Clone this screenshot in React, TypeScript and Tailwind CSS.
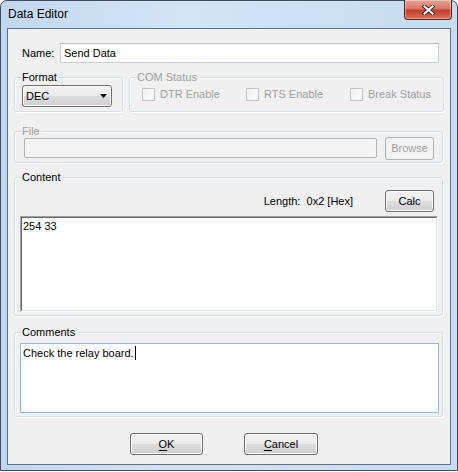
import type { ReactNode } from 'react';

const font = { fontFamily: '"Liberation Sans", Arial, sans-serif' };

function GroupBox({ label, disabled, className, children }: { label: string; disabled?: boolean; className?: string; children?: ReactNode }) {
  return (
    <div className={`relative rounded-[3px] border border-[#d5dfe5] shadow-[inset_1px_1px_0_#ffffff,1px_1px_0_#ffffff] ${className ?? ''}`}>
      <span className={`absolute -top-[7px] left-[6px] bg-[#f0f0f0] px-[1px] text-[11px] leading-[13px] ${disabled ? 'text-[#a0a0a0]' : 'text-black'}`}>
        {label}
      </span>
      {children}
    </div>
  );
}

function Button({ children, disabled, className }: { children: ReactNode; disabled?: boolean; className?: string }) {
  return (
    <button
      disabled={disabled}
      className={`flex items-center justify-center rounded-[3px] border text-[11px] leading-[13px] ${
        disabled
          ? 'border-[#adb2b5] bg-[#f4f4f4] text-[#a0a0a0]'
          : 'border-[#707070] bg-[linear-gradient(#f2f2f2_0%,#ebebeb_50%,#dddddd_51%,#cfcfcf_100%)] text-black shadow-[inset_0_0_0_1px_#fcfcfc]'
      } ${className ?? ''}`}
    >
      {children}
    </button>
  );
}

function CheckBox({ label, className }: { label: string; className?: string }) {
  return (
    <div className={`flex items-center gap-[5px] ${className ?? ''}`}>
      <div className="h-[13px] w-[13px] shrink-0 border border-[#c5c5c5] bg-[linear-gradient(135deg,#f0f0f0,#fbfbfb)]" />
      <span className="text-[11px] leading-[13px] text-[#a0a0a0]">{label}</span>
    </div>
  );
}

export default function App() {
  return (
    <div className="h-[472px] w-[458px] bg-white" style={font}>
      <div className="flex h-[471px] w-[458px] flex-col rounded-t-[7px] border border-[#3e4c5e] bg-[linear-gradient(90deg,#c2d8f0_0%,#d3e4f6_40%,#c6dbf1_100%)] px-[6px]">
        {/* Title bar */}
        <div className="flex h-[27px] items-start justify-between">
          <span className="pl-[1px] pt-[6px] text-[12px] leading-[15px] text-black">Data Editor</span>
          <div className="-mt-px -mr-px flex h-[20px] w-[48px] items-center justify-center rounded-b-[4px] border border-t-0 border-[#5b2219] bg-[linear-gradient(#e9a596_0%,#d97563_45%,#c2402e_55%,#d6705a_100%)] shadow-[inset_0_0_0_1px_rgba(255,255,255,0.35)]">
            <svg width="13" height="10" viewBox="0 0 13 10">
              <path d="M2.5 1.5 L10.5 8.5 M10.5 1.5 L2.5 8.5" stroke="#3b2a2a" strokeWidth="4" strokeLinecap="square" />
              <path d="M2.5 1.5 L10.5 8.5 M10.5 1.5 L2.5 8.5" stroke="#ffffff" strokeWidth="2" strokeLinecap="square" />
            </svg>
          </div>
        </div>

        {/* Client area */}
        <div className="flex h-[437px] flex-col border border-[#5f7186] bg-[#f0f0f0] pl-[6px] pr-[7px]">
          {/* Name */}
          <div className="mt-[14px] flex items-center">
            <span className="w-[46px] pl-[8px] text-[11px] leading-[13px] text-black">Name:</span>
            <div className="mr-[4px] flex h-[20px] flex-1 items-center border border-[#c9ced6] border-t-[#b9bdc5] bg-white px-[3px] text-[11px] text-black">
              Send Data
            </div>
          </div>

          {/* Format / COM Status */}
          <div className="mt-[14px] flex gap-[6px]">
            <GroupBox label="Format" className="h-[35px] w-[109px] shrink-0 pl-[7px] pt-[7px]">
              <div className="flex h-[22px] w-[90px] items-center justify-between rounded-[3px] border border-[#707070] bg-[linear-gradient(#f2f2f2_0%,#ebebeb_50%,#dddddd_51%,#cfcfcf_100%)] pl-[3px] pr-[4px] text-[11px] text-black shadow-[inset_0_0_0_1px_#fcfcfc]">
                <span>DEC</span>
                <svg width="7" height="4" viewBox="0 0 7 4">
                  <path d="M0 0 H7 L3.5 4 Z" fill="#000" />
                </svg>
              </div>
            </GroupBox>
            <GroupBox label="COM Status" disabled className="-mr-px flex h-[35px] min-w-0 flex-1 items-start pl-[12px] pt-[10px]">
              <CheckBox label="DTR Enable" className="w-[104px] shrink-0" />
              <CheckBox label="RTS Enable" className="w-[104px] shrink-0" />
              <CheckBox label="Break Status" />
            </GroupBox>
          </div>

          {/* File */}
          <GroupBox label="File" disabled className="mt-[19px] flex h-[32px] items-start gap-[8px] pl-[9px] pt-[5px]">
            <div className="mt-px h-[20px] w-[353px] rounded-[2px] border border-[#b4b4b4] bg-[#f4f4f4]" />
            <Button disabled className="h-[23px] w-[49px]">Browse</Button>
          </GroupBox>

          {/* Content */}
          <GroupBox label="Content" className="mt-[14px] flex h-[139px] flex-col pl-[5px] pr-[4px] pt-[12px]">
            <div className="flex items-center justify-end pr-[4px]">
              <span className="mr-[32px] text-[11px] leading-[13px] text-black">Length:&nbsp; 0x2 [Hex]</span>
              <Button className="h-[22px] w-[49px]">Calc</Button>
            </div>
            <div className="mt-[4px] h-[96px] border border-[#a0a0a0] border-b-white border-r-white">
              <div className="h-full border border-[#696969] border-b-[#e3e3e3] border-r-[#e3e3e3] bg-white px-[1px] pt-[2px] text-[11px] leading-[13px] text-black">
                254 33
              </div>
            </div>
          </GroupBox>

          {/* Comments */}
          <GroupBox label="Comments" className="mt-[16px] flex h-[85px] flex-col pl-[5px] pr-[3px] pt-[10px]">
            <div className="flex h-[70px] items-start border border-[#8fb8e0] bg-white px-[2px] pt-[3px] text-[11px] leading-[13px] text-black">
              <span>Check the relay board.</span>
              <span className="ml-px mt-[-1px] h-[14px] w-px bg-black" />
            </div>
          </GroupBox>

          {/* Buttons */}
          <div className="mt-[16px] flex gap-[41px] pl-[116px]">
            <Button className="h-[22px] w-[73px]">
              <span className="underline underline-offset-2">O</span>K
            </Button>
            <Button className="h-[22px] w-[74px]">
              <span className="underline underline-offset-2">C</span>ancel
            </Button>
          </div>
        </div>
      </div>
    </div>
  );
}
